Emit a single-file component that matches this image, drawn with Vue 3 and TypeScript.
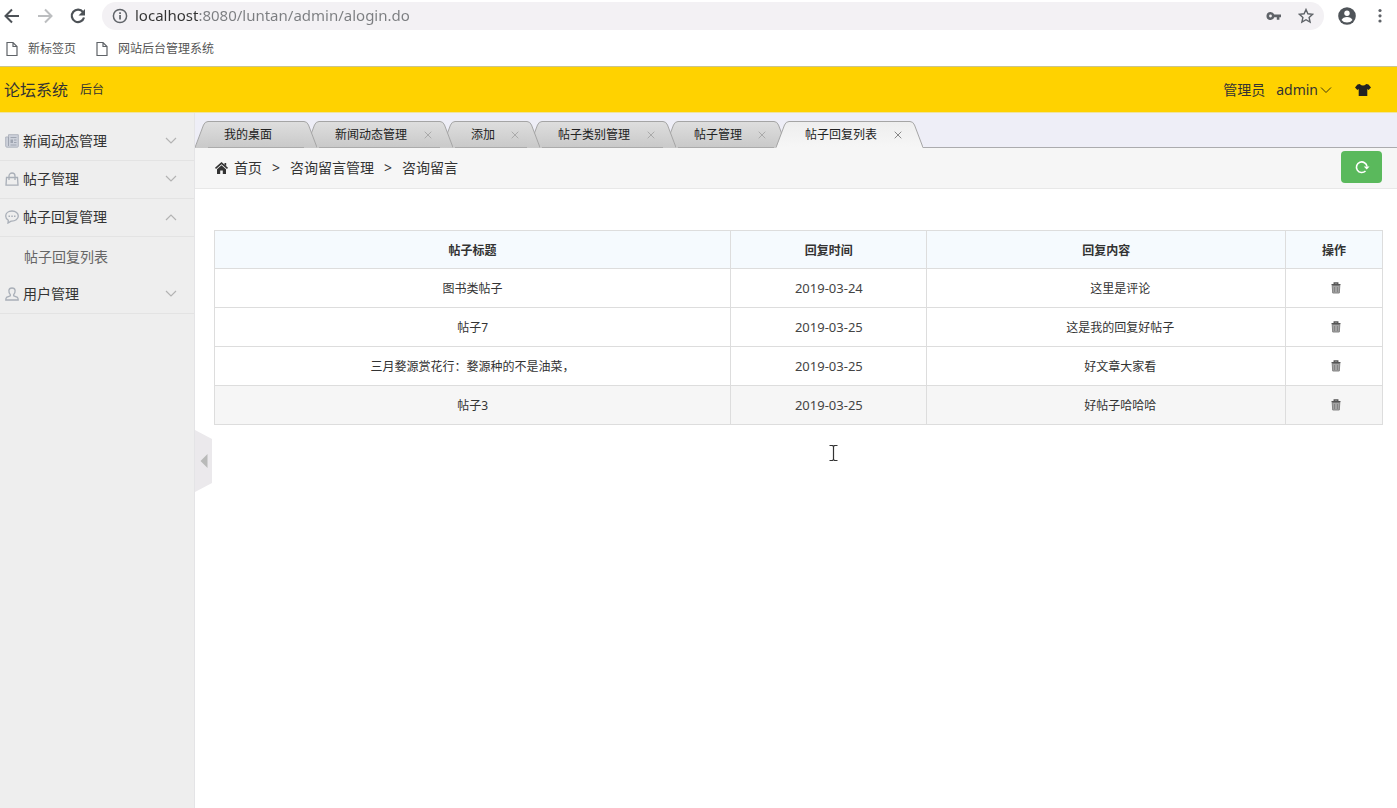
<script setup lang="ts">
import { ref } from 'vue'

interface MenuItem {
  label: string
  icon: 'news' | 'bag' | 'chat' | 'user'
  open: boolean
  children: string[]
}
interface Tab {
  label: string
  size: 'short' | 'medium' | 'long'
  closable: boolean
}
interface Reply {
  title: string
  date: string
  content: string
}

const url = ref('localhost:8080/luntan/admin/alogin.do')
const bookmarks = ['新标签页', '网站后台管理系统']
const menu = ref<MenuItem[]>([
  { label: '新闻动态管理', icon: 'news', open: false, children: [] },
  { label: '帖子管理', icon: 'bag', open: false, children: [] },
  { label: '帖子回复管理', icon: 'chat', open: true, children: ['帖子回复列表'] },
  { label: '用户管理', icon: 'user', open: false, children: [] },
])
const tabs: Tab[] = [
  { label: '我的桌面', size: 'medium', closable: false },
  { label: '新闻动态管理', size: 'long', closable: true },
  { label: '添加', size: 'short', closable: true },
  { label: '帖子类别管理', size: 'long', closable: true },
  { label: '帖子管理', size: 'medium', closable: true },
  { label: '帖子回复列表', size: 'long', closable: true },
]
const active = ref(5)
const replies: Reply[] = [
  { title: '图书类帖子', date: '2019-03-24', content: '这里是评论' },
  { title: '帖子7', date: '2019-03-25', content: '这是我的回复好帖子' },
  { title: '三月婺源赏花行：婺源种的不是油菜，', date: '2019-03-25', content: '好文章大家看' },
  { title: '帖子3', date: '2019-03-25', content: '好帖子哈哈哈' },
]
</script>

<template>
  <div class="app">
    <div class="chrome">
      <div class="toolbar">
        <button class="nav" aria-label="后退">
          <svg width="18" height="18" viewBox="0 0 18 18" fill="none" stroke="#4d5257" stroke-width="2"><path d="M16 9H3M9 2.500L2.500 9L9 15.500" /></svg>
        </button>
        <button class="nav" aria-label="前进">
          <svg width="18" height="18" viewBox="0 0 18 18" fill="none" stroke="#bcbec0" stroke-width="2"><path d="M2 9h13M9 2.500L15.500 9L9 15.500" /></svg>
        </button>
        <button class="nav" aria-label="刷新">
          <svg width="18" height="18" viewBox="0 0 18 18"><path d="M14 5.200A6.200 6.200 0 1 0 15 10.500" fill="none" stroke="#4d5257" stroke-width="2.200" /><path d="M16 2v6.500H9.500z" fill="#4d5257" /></svg>
        </button>
        <div class="omnibox">
          <svg width="16" height="16" viewBox="0 0 16 16"><circle cx="8" cy="8" r="6.600" fill="none" stroke="#5f6368" stroke-width="1.500" /><path d="M7.200 7h1.700v4.600H7.200zM7.200 4.200h1.700v1.700H7.200z" fill="#5f6368" /></svg>
          <input v-model="url" class="url" type="text" aria-label="地址" />
          <svg class="key" width="16" height="16" viewBox="0 0 16 16" fill="#5f6368"><path fill-rule="evenodd" d="M4.500 4a4 4 0 1 0 3.800 5.200h2.500v2.500h2.600V9.200H15V6.600H8.300A4 4 0 0 0 4.500 4zm0 2.600a1.400 1.400 0 1 1 0 2.800 1.400 1.400 0 0 1 0-2.800z" /></svg>
          <svg width="16" height="16" viewBox="0 0 16 16" fill="none" stroke="#5f6368" stroke-width="1.400"><path d="M8 1.500l1.900 4.300 4.700.5-3.500 3.200 1 4.600L8 11.700l-4.100 2.400 1-4.600-3.500-3.200 4.700-.5z" /></svg>
        </div>
        <button class="nav profile" aria-label="个人资料">
          <svg width="18" height="18" viewBox="0 0 18 18"><circle cx="9" cy="9" r="8.800" fill="#4f5459" /><circle cx="9" cy="6.200" r="2.700" fill="#fff" /><path d="M3.500 13q1.500-3 5.500-3t5.500 3q-2 2.600-5.500 2.600T3.500 13z" fill="#fff" /></svg>
        </button>
        <button class="nav" aria-label="更多">
          <svg width="18" height="18" viewBox="0 0 18 18" fill="#5f6368"><circle cx="9" cy="3.500" r="1.600" /><circle cx="9" cy="8.800" r="1.600" /><circle cx="9" cy="14" r="1.600" /></svg>
        </button>
      </div>
      <nav class="bookmarks">
        <a v-for="b in bookmarks" :key="b" href="#">
          <svg width="12" height="16" viewBox="0 0 12 16" fill="none" stroke="#5f6368" stroke-width="1.200"><path d="M1 1.500h6l4 4v9H1zM7 1.500v4h4" /></svg>{{ b }}
        </a>
      </nav>
    </div>

    <header class="header">
      <h1>论坛系统</h1>
      <span class="sub">后台</span>
      <span class="role">管理员</span>
      <button class="account">admin<svg width="12" height="8" viewBox="0 0 12 8" fill="none" stroke="#40390f" stroke-width="1"><path d="M1 1.500l5 5 5-5" /></svg></button>
      <button class="skin" aria-label="换肤">
        <svg width="16" height="14" viewBox="0 0 16 14" fill="#222"><path d="M4.700 1Q8 4 11.300 1L13.500 1.500 16 4.500 13.600 7 12.300 6V13H3.700V6L2.400 7 0 4.500 2.500 1.500z" /></svg>
      </button>
    </header>

    <div class="body">
      <aside class="sidebar">
        <div v-for="m in menu" :key="m.label">
          <button class="menu" :aria-expanded="m.open" @click="m.open = !m.open">
            <svg v-if="m.icon === 'news'" width="14" height="14" viewBox="0 0 14 14"><path d="M3.500.7h9.800v11.500q0 1-1 1H2Q.7 13.200.7 12V3h2.800z" fill="#cdd1da" stroke="#b0b5bf" /><path d="M3.500 3v9M5.500 3.500h6M9 6h2.500M9 8.500h2.500M5.500 11h6" fill="none" stroke="#9fa5b1" /><path d="M5.500 5.500H8V9H5.500z" fill="#9fa5b1" /></svg>
            <svg v-else-if="m.icon === 'bag'" width="14" height="14" viewBox="0 0 14 14" fill="none" stroke="#a9afb8" stroke-width="1.300"><path d="M1.500 5.500h11l.5 7.700H1zM4 8V4a3 3 0 0 1 6 0v4" /></svg>
            <svg v-else-if="m.icon === 'chat'" width="14" height="14" viewBox="0 0 14 14"><path d="M7 1C3.300 1 .7 3.200.7 6c0 1.900 1 3.300 2.600 4.200L3 13l3-1.900c4.200.3 7.300-2 7.300-5.100C13.300 3.200 10.700 1 7 1z" fill="none" stroke="#a9afb8" stroke-width="1.300" /><path d="M3.500 5.500h1.500V7H3.500zM6.300 5.500h1.500V7H6.300zM9 5.500h1.500V7H9z" fill="#a9afb8" /></svg>
            <svg v-else width="14" height="14" viewBox="0 0 14 14" fill="none" stroke="#a9afb8" stroke-width="1.300"><path d="M7 1C2.800 1 3.500 5.500 5.300 7.700v1.200L1.500 10.400Q.8 11 .8 13h12.400q0-2-.7-2.600L8.700 8.900V7.700C10.500 5.500 11.200 1 7 1z" /></svg>
            <span>{{ m.label }}</span>
            <svg class="chevron" :class="{ up: m.open }" width="12" height="8" viewBox="0 0 12 8" fill="none" stroke="#b3b3b3" stroke-width="1.200"><path d="M1 1l5 5 5-5" /></svg>
          </button>
          <template v-if="m.open">
            <a v-for="c in m.children" :key="c" href="#" class="child">{{ c }}</a>
          </template>
        </div>
      </aside>

      <main class="main">
        <button class="collapse" aria-label="收起菜单">
          <svg width="18" height="62" viewBox="0 0 18 62"><path d="M0 0l17 9v44l-17 9z" fill="#ebe9ec" /><path d="M12.500 24v14l-7-7z" fill="#b9bab9" /></svg>
        </button>

        <div class="tabs" role="tablist">
          <div
            v-for="(t, i) in tabs"
            :key="t.label"
            class="tab"
            :class="[t.size, `layer-${i}`, { active: i === active }]"
          >
            <svg class="cap" width="13" height="27" viewBox="0 0 13 27"><path class="fill" d="M0 27L8.500 4Q10 .5 13 .5V27z" /><path class="edge" d="M0 26.500L8.500 4Q10 .5 13 .5" /></svg>
            <div class="face">
              <button class="label" role="tab" :aria-selected="i === active" @click="active = i">{{ t.label }}</button>
              <button v-if="t.closable" class="close" aria-label="关闭">
                <svg width="8" height="8" viewBox="0 0 8 8"><path d="M.7.700l6.600 6.600M7.300.700L.7 7.300" /></svg>
              </button>
            </div>
            <svg class="cap" width="13" height="27" viewBox="0 0 13 27"><path class="fill" d="M13 27L4.500 4Q3 .5 0 .5V27z" /><path class="edge" d="M13 26.500L4.500 4Q3 .5 0 .5" /></svg>
          </div>
          <svg class="defs" width="0" height="0" aria-hidden="true">
            <linearGradient id="tab-grey" x1="0" y1="0" x2="0" y2="1"><stop offset="0" stop-color="#dedede" /><stop offset="1" stop-color="#c9c9c9" /></linearGradient>
            <linearGradient id="tab-light" x1="0" y1="0" x2="0" y2="1"><stop offset="0" stop-color="#eeeeee" /><stop offset="1" stop-color="#f6f6f6" /></linearGradient>
          </svg>
        </div>

        <nav class="crumbs">
          <svg width="13" height="12" viewBox="0 0 13 12" fill="#333"><path d="M6.500 0L13 5.800 12 7 6.500 2.200 1 7 0 5.800zM2 7.200l4.500-4L11 7.200V12H7.800V8.500H5.200V12H2zM9.500 1h1.700v3L9.500 2.500z" /></svg>
          <a href="#">首页</a><span class="sep">&gt;</span><span>咨询留言管理</span><span class="sep">&gt;</span><span>咨询留言</span>
          <button class="refresh" aria-label="刷新页面">
            <svg width="16" height="14" viewBox="0 0 16 14"><path d="M11.500 11A5.300 5.300 0 1 1 13 6.500" fill="none" stroke="#fff" stroke-width="1.600" /><path d="M9.800 6.500h5.700l-2.800 3z" fill="#fff" /></svg>
          </button>
        </nav>

        <section class="content">
          <table>
            <thead>
              <tr><th class="c-title">帖子标题</th><th class="c-date">回复时间</th><th class="c-content">回复内容</th><th class="c-action">操作</th></tr>
            </thead>
            <tbody>
              <tr v-for="r in replies" :key="r.title">
                <td>{{ r.title }}</td>
                <td class="date">{{ r.date }}</td>
                <td class="reply">{{ r.content }}</td>
                <td class="action">
                  <button aria-label="删除">
                    <svg width="10" height="12" viewBox="0 0 10 12"><path d="M1.200 3.500h7.600l-.5 7.500H1.700z" fill="#a3a3a3" stroke="#858585" /><path d="M.5 2.700h9M3.200 2V1h3.600v1" fill="none" stroke="#555" stroke-width="1.300" /><path d="M3.500 5v5M6.500 5v5" stroke="#777" stroke-width=".700" /></svg>
                  </button>
                </td>
              </tr>
            </tbody>
          </table>
        </section>
        <svg class="caret" width="9" height="18" viewBox="0 0 9 18" fill="none" stroke="#333"><path d="M.5 1.500h3l1 1 1-1h3M4.500 2v14M.5 16.500h3l1-1 1 1h3" stroke-width="1.200" /></svg>
      </main>
    </div>
  </div>
</template>

<style>
body {
  margin: 0;
  background: #fff;
}
</style>

<style scoped>
* {
  box-sizing: border-box;
}
.app {
  display: flex;
  flex-direction: column;
  min-height: 100vh;
  font: 12px/18px "Noto Sans", "Noto Sans CJK SC", sans-serif;
  color: #333;
}
button {
  display: flex;
  align-items: center;
  justify-content: center;
  padding: 0;
  border: 0;
  background: none;
  font: inherit;
  color: inherit;
  cursor: pointer;
}
a {
  color: inherit;
  text-decoration: none;
}
svg {
  flex: none;
  display: block;
}
.chrome {
  height: 67px;
  border-bottom: 1px solid #c9c48f;
}
.toolbar {
  display: flex;
  align-items: center;
  height: 32px;
  padding: 0 8px 0 3px;
}
.nav {
  width: 18px;
  margin-right: 15px;
}
.nav:last-child {
  margin-right: 0;
}
.omnibox {
  display: flex;
  flex: 1;
  align-items: center;
  gap: 16px;
  height: 28px;
  margin-right: 14px;
  padding: 0 10px;
  border-radius: 14px;
  background: #f3f1f4;
}
.url {
  flex: 1;
  min-width: 0;
  margin-left: -9px;
  padding: 0 0 2px;
  border: 0;
  outline: 0;
  font: 15px/20px "Noto Sans", sans-serif;
  color: transparent;
  background: linear-gradient(to right, #333 64px, #7b7d80 64px);
  -webkit-background-clip: text;
  background-clip: text;
}
.bookmarks {
  display: flex;
  align-items: center;
  gap: 20px;
  height: 34px;
  padding-left: 6px;
  color: #555;
}
.bookmarks a {
  display: flex;
  align-items: center;
  gap: 10px;
}
.header {
  display: flex;
  align-items: center;
  height: 46px;
  padding: 0 26px 0 4px;
  border-bottom: 1px solid #f0e4a0;
  background: #ffd200;
  font-size: 14px;
}
h1 {
  margin: 0;
  font-size: 16px;
  font-weight: 400;
}
.sub {
  margin-left: 12px;
  font-size: 12px;
}
.role {
  margin-left: auto;
}
.account {
  gap: 2px;
  margin: 0 23px 0 11px;
}
.body {
  display: flex;
  flex: 1;
}
.sidebar {
  flex: none;
  width: 195px;
  padding-top: 10px;
  border-right: 1px solid #e4e4e6;
  background: #eee;
  font-size: 14px;
}
.menu {
  justify-content: flex-start;
  gap: 4px;
  width: 100%;
  height: 38px;
  padding: 0 17px 2px 5px;
  border-bottom: 1px solid #e3e3e3;
}
.chevron {
  margin-left: auto;
}
.up {
  transform: rotate(180deg);
}
.child {
  display: flex;
  align-items: center;
  height: 39px;
  padding-left: 24px;
  color: #666;
}
.main {
  position: relative;
  flex: 1;
  min-width: 0;
}
.collapse {
  position: absolute;
  left: 0;
  top: 317px;
}
.tabs {
  display: flex;
  align-items: flex-end;
  height: 35px;
  background: linear-gradient(#ababae, #ababae) bottom / 100% 1px no-repeat #eeeef7;
}
.tab {
  position: relative;
  display: flex;
  height: 27px;
  margin-right: -11px;
}
.short {
  min-width: 98px;
}
.medium {
  min-width: 122px;
}
.long {
  min-width: 147px;
}
.layer-0 {
  z-index: 5;
}
.layer-1 {
  z-index: 4;
}
.layer-2 {
  z-index: 3;
}
.layer-3 {
  z-index: 2;
}
.layer-4 {
  z-index: 1;
}
.tab.active {
  z-index: 6;
}
.fill {
  fill: url(#tab-grey);
}
.active .fill {
  fill: url(#tab-light);
}
.edge {
  fill: none;
  stroke: #a5a5a5;
}
.face {
  display: flex;
  flex: 1;
  align-items: center;
  padding: 0 8px 0 16px;
  border-top: 1px solid #a5a5a5;
  border-bottom: 1px solid #ababab;
  background: linear-gradient(#dedede, #c9c9c9);
}
.active .face {
  border-bottom-color: #f6f6f6;
  background: linear-gradient(#eee, #f6f6f6);
}
.label {
  color: #222;
}
.close {
  margin-left: auto;
}
.close path {
  fill: none;
  stroke: #aaa;
}
.active .close path {
  stroke: #888;
}
.defs {
  position: absolute;
}
.crumbs {
  display: flex;
  align-items: center;
  height: 41px;
  padding: 0 15px 0 20px;
  border-bottom: 1px solid #e8e8e8;
  background: #f6f6f6;
  font-size: 14px;
}
.crumbs a {
  margin-left: 6px;
}
.sep {
  width: 28px;
  text-align: center;
}
.refresh {
  width: 41px;
  height: 32px;
  margin: 0 0 2px auto;
  border-radius: 4px;
  background: #5ab95c;
}
.content {
  padding: 41px 14px 0 19px;
}
table {
  width: 100%;
  table-layout: fixed;
  border-collapse: collapse;
  text-align: center;
}
th,
td {
  height: 39px;
  padding: 2px 8px 0;
  border: 1px solid #ddd;
}
th {
  height: 38px;
  background: #f5fafe;
  font-weight: 700;
}
.c-title {
  width: 44.2%;
}
.c-date {
  width: 16.8%;
}
.c-content {
  width: 30.7%;
}
.date {
  padding-top: 0;
  font-size: 13px;
  color: #444;
}
.reply {
  padding-left: 36px;
}
.action button {
  margin: 0 auto;
}
td.action {
  padding: 0 8px 0 12px;
}
tbody tr:last-child {
  background: #f6f6f6;
}
.caret {
  position: absolute;
  left: 634px;
  top: 331px;
}
</style>
